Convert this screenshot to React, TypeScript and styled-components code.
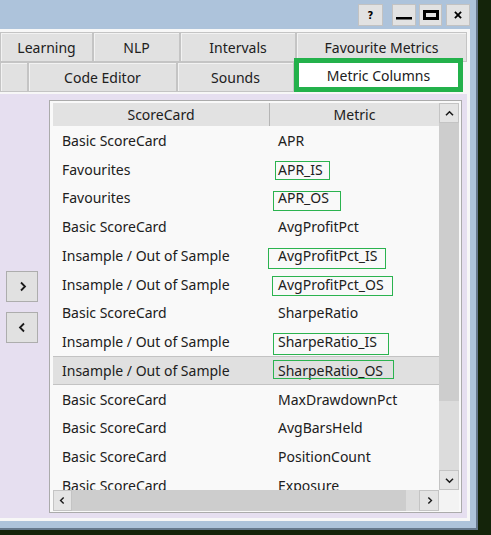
import React from "react";
import styled, { createGlobalStyle } from "styled-components";

const Global = createGlobalStyle`
  html, body { margin: 0; padding: 0; background: #14240a; }
  body { font-family: "Noto Sans", "Open Sans", sans-serif; color: #1f1f1f; }
  #root { width: 491px; height: 535px; }
`;

const Window = styled.div`
  width: 478px;
  height: 530px;
  box-sizing: border-box;
  background: #adc3db;
  border-right: 2px solid #66788c;
  border-bottom: 2px solid #66788c;
  padding: 0 6px 7px 0;
  display: flex;
  flex-direction: column;
`;

const TitleBar = styled.div`
  height: 29px;
  flex: none;
  display: flex;
  justify-content: flex-end;
  align-items: flex-start;
  padding-top: 4px;
  box-sizing: border-box;
`;

const CapButton = styled.div<{ $w: number; $ml: number }>`
  width: ${(p) => p.$w}px;
  height: 22px;
  margin-left: ${(p) => p.$ml}px;
  box-sizing: border-box;
  background: #e2e2e2;
  border: 1px solid #c2c2c2;
  display: flex;
  align-items: center;
  justify-content: center;
  font-family: "DejaVu Sans", sans-serif;
  font-weight: bold;
  font-size: 10px;
  color: #000;
`;

const Client = styled.div`
  flex: 1;
  background: #f7f7f7;
  padding: 3px 3px 3px 0;
  display: flex;
  flex-direction: column;
  min-height: 0;
`;

const TabRow = styled.div`
  display: flex;
  height: 30px;
  flex: none;
  align-items: flex-end;
`;

const Tab = styled.div<{ $w: number }>`
  width: ${(p) => p.$w}px;
  height: 30px;
  box-sizing: border-box;
  background: #e1e1e1;
  border: 1px solid #c4c4c4;
  box-shadow: inset 1px 1px 0 #f2f2f2;
  display: flex;
  align-items: center;
  justify-content: center;
  font-size: 14px;
  color: #202020;
  flex: none;
`;

const ActiveTab = styled(Tab)`
  height: 34px;
  background: #ffffff;
  border: 5px solid #23b14b;
  box-shadow: none;
  padding-top: 1px;
  position: relative;
  z-index: 1;
`;

const Panel = styled.div`
  flex: 1;
  margin-top: 2px;
  background: #e6dff0;
  display: flex;
  padding: 6px 5px 5px 0;
  min-height: 0;
`;

const SideColumn = styled.div`
  width: 49px;
  flex: none;
  display: flex;
  flex-direction: column;
  justify-content: center;
  align-items: flex-start;
  padding-left: 6px;
  box-sizing: border-box;
  gap: 10px;
  padding-top: 1px;
`;

const MoveButton = styled.div`
  width: 32px;
  height: 31px;
  box-sizing: border-box;
  background: #e1e1e1;
  border: 1px solid #adadad;
  display: flex;
  align-items: center;
  justify-content: center;
`;

const ListBox = styled.div`
  width: 413px;
  height: 413px;
  box-sizing: border-box;
  border: 1px solid #ababab;
  background: #f9f9f9;
  padding: 2px 2px 1px 3px;
  display: grid;
  grid-template-columns: 386px 20px;
  grid-template-rows: 387px 21px;
`;

const Viewport = styled.div`
  overflow: hidden;
  display: flex;
  flex-direction: column;
`;

const HeaderRow = styled.div`
  display: flex;
  height: 23px;
  flex: none;
  background: #e2e2e2;
`;

const HeaderCell = styled.div<{ $w: number; $sep?: boolean }>`
  width: ${(p) => p.$w}px;
  flex: none;
  box-sizing: border-box;
  border-right: ${(p) => (p.$sep ? "1px solid #b5b5b5" : "none")};
  display: flex;
  align-items: center;
  justify-content: center;
  font-size: 14px;
  color: #202020;
`;

const Row = styled.div<{ $sel?: boolean }>`
  display: flex;
  height: 28.75px;
  flex: none;
  box-sizing: border-box;
  background: ${(p) => (p.$sel ? "#e0e0e0" : "transparent")};
  border-top: 1px solid ${(p) => (p.$sel ? "#c3c3c3" : "transparent")};
  border-bottom: 1px solid ${(p) => (p.$sel ? "#c3c3c3" : "transparent")};
`;

const Cell = styled.div<{ $w: number; $pl: number }>`
  width: ${(p) => p.$w}px;
  flex: none;
  position: relative;
  display: flex;
  align-items: center;
  padding-left: ${(p) => p.$pl}px;
  box-sizing: border-box;
  font-size: 14px;
  color: #202020;
  white-space: nowrap;
`;

const Mark = styled.div`
  position: absolute;
  box-sizing: border-box;
  border: 1.5px solid #2bb34f;
  pointer-events: none;
`;

const VScroll = styled.div`
  display: flex;
  flex-direction: column;
  background: #dcdcdc;
`;

const HScroll = styled.div`
  display: flex;
  background: #dcdcdc;
`;

const ScrollBtn = styled.div<{ $w: number; $h: number }>`
  width: ${(p) => p.$w}px;
  height: ${(p) => p.$h}px;
  flex: none;
  box-sizing: border-box;
  background: #e4e4e4;
  border: 1px solid #c4c4c4;
  display: flex;
  align-items: center;
  justify-content: center;
`;

const Thumb = styled.div<{ $w?: number; $h?: number }>`
  flex: none;
  width: ${(p) => (p.$w ? `${p.$w}px` : "auto")};
  height: ${(p) => (p.$h ? `${p.$h}px` : "auto")};
  background: #cdcdcd;
`;

const Spacer = styled.div`
  flex: 1;
`;

const Corner = styled.div`
  background: #f3f3f3;
`;

const Chevron = ({ dir, size = 8 }: { dir: "up" | "down" | "left" | "right"; size?: number }) => {
  const paths: Record<string, string> = {
    up: "M1 6 L5 2 L9 6",
    down: "M1 2 L5 6 L9 2",
    left: "M6 1 L2 5 L6 9",
    right: "M3 1 L7 5 L3 9",
  };
  const horiz = dir === "up" || dir === "down";
  return (
    <svg width={horiz ? size + 2 : size} height={horiz ? size : size + 2} viewBox={horiz ? "0 0 10 8" : "0 0 9 10"}>
      <path d={paths[dir]} fill="none" stroke="#1a1a1a" strokeWidth="1.8" />
    </svg>
  );
};

type Box = { l: number; t: number; w: number; h: number };
const rows: { sc: string; m: string; box?: Box; sel?: boolean }[] = [
  { sc: "Basic ScoreCard", m: "APR" },
  { sc: "Favourites", m: "APR_IS", box: { l: 5, t: 5, w: 55, h: 19 } },
  { sc: "Favourites", m: "APR_OS", box: { l: 3, t: 6.5, w: 68, h: 20 } },
  { sc: "Basic ScoreCard", m: "AvgProfitPct" },
  { sc: "Insample / Out of Sample", m: "AvgProfitPct_IS", box: { l: -2, t: 6, w: 118, h: 21 } },
  { sc: "Insample / Out of Sample", m: "AvgProfitPct_OS", box: { l: 2, t: 5.25, w: 121, h: 20 } },
  { sc: "Basic ScoreCard", m: "SharpeRatio" },
  { sc: "Insample / Out of Sample", m: "SharpeRatio_IS", box: { l: 3, t: 5, w: 116, h: 22 } },
  { sc: "Insample / Out of Sample", m: "SharpeRatio_OS", box: { l: 3, t: 4, w: 121, h: 19 }, sel: true },
  { sc: "Basic ScoreCard", m: "MaxDrawdownPct" },
  { sc: "Basic ScoreCard", m: "AvgBarsHeld" },
  { sc: "Basic ScoreCard", m: "PositionCount" },
  { sc: "Basic ScoreCard", m: "Exposure" },
];

export default function App() {
  return (
    <>
      <Global />
      <Window>
        <TitleBar>
          <CapButton $w={25} $ml={0}>?</CapButton>
          <CapButton $w={24} $ml={9}>
            <svg width="16" height="12" viewBox="0 0 16 12">
              <rect x="0" y="8" width="16" height="2.5" fill="#000" />
            </svg>
          </CapButton>
          <CapButton $w={23} $ml={3}>
            <svg width="16" height="10" viewBox="0 0 16 10">
              <rect x="1.5" y="1.5" width="13" height="7" fill="none" stroke="#000" strokeWidth="3" />
            </svg>
          </CapButton>
          <CapButton $w={24} $ml={4}>
            <svg width="8" height="8" viewBox="0 0 9 9">
              <path d="M1 1 L8 8 M8 1 L1 8" stroke="#000" strokeWidth="2" />
            </svg>
          </CapButton>
        </TitleBar>
        <Client>
          <TabRow>
            <Tab $w={93}>Learning</Tab>
            <Tab $w={87}>NLP</Tab>
            <Tab $w={116}>Intervals</Tab>
            <Tab $w={171}>Favourite Metrics</Tab>
          </TabRow>
          <TabRow>
            <Tab $w={28} />
            <Tab $w={149}>Code Editor</Tab>
            <Tab $w={117}>Sounds</Tab>
            <ActiveTab $w={169}>Metric Columns</ActiveTab>
          </TabRow>
          <Panel>
            <SideColumn>
              <MoveButton>
                <Chevron dir="right" size={9} />
              </MoveButton>
              <MoveButton>
                <Chevron dir="left" size={9} />
              </MoveButton>
            </SideColumn>
            <ListBox>
              <Viewport>
                <HeaderRow>
                  <HeaderCell $w={217} $sep>ScoreCard</HeaderCell>
                  <HeaderCell $w={169}>Metric</HeaderCell>
                </HeaderRow>
                {rows.map((r, i) => (
                  <Row key={i} $sel={r.sel}>
                    <Cell $w={217} $pl={9}>{r.sc}</Cell>
                    <Cell $w={169} $pl={8}>
                      {r.m}
                      {r.box && (
                        <Mark
                          style={{
                            left: r.box.l,
                            top: r.box.t - (r.sel ? 1 : 0),
                            width: r.box.w,
                            height: r.box.h,
                          }}
                        />
                      )}
                    </Cell>
                  </Row>
                ))}
              </Viewport>
              <VScroll>
                <ScrollBtn $w={20} $h={20}>
                  <Chevron dir="up" size={7} />
                </ScrollBtn>
                <Thumb $h={278} />
                <Spacer />
                <ScrollBtn $w={20} $h={20}>
                  <Chevron dir="down" size={7} />
                </ScrollBtn>
              </VScroll>
              <HScroll>
                <ScrollBtn $w={19} $h={21}>
                  <Chevron dir="left" size={7} />
                </ScrollBtn>
                <Thumb $w={334} />
                <Spacer />
                <ScrollBtn $w={20} $h={21}>
                  <Chevron dir="right" size={7} />
                </ScrollBtn>
              </HScroll>
              <Corner />
            </ListBox>
          </Panel>
        </Client>
      </Window>
    </>
  );
}
